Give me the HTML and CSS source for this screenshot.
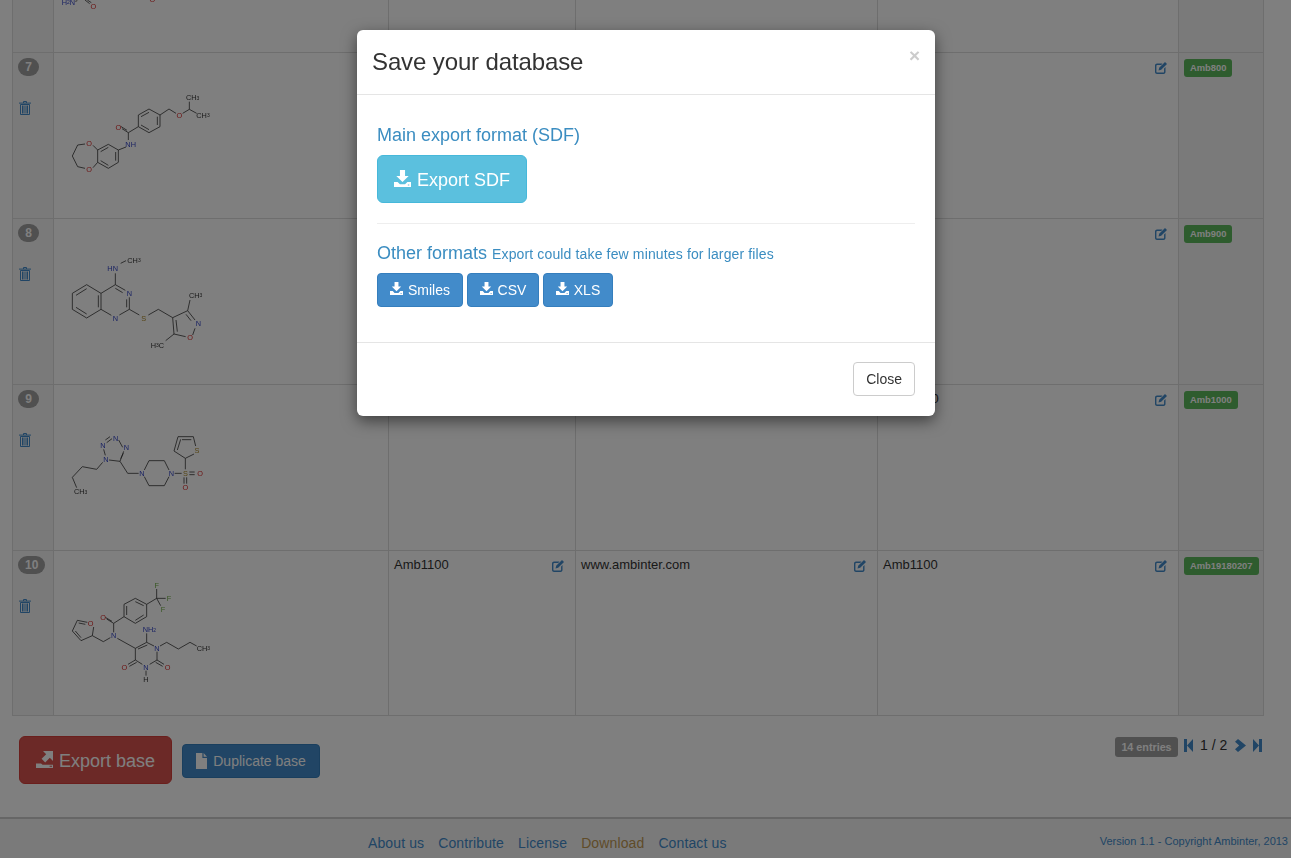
FILE: index.html
```html
<!DOCTYPE html>
<html lang="en">
<head>
<meta charset="utf-8">
<title>Save your database</title>
<link rel="stylesheet" href="styles.css">
</head>
<body>
<svg class="defs" width="0" height="0" aria-hidden="true">
  <symbol id="i-download" viewBox="0 0 16 16"><path d="M5.6 0h4.8v5.6h3.4L8 11.4 2.2 5.6h3.4zM0 11.2h3.4l2.2 2.2h4.8l2.2-2.2H16V16H0zM13 13.6v1h1.4v-1z" fill-rule="evenodd"/></symbol>
  <symbol id="i-export" viewBox="0 0 17 18"><path d="M0 13.4h5l1.6 1.4h10.4V18H0zM13.6 15.8v1H16v-1z" fill-rule="evenodd"/><path d="M7 1h10v10l-3.2-3.2-4.6 4.6-3.6-3.6 4.600-4.600z"/></symbol>
  <symbol id="i-file" viewBox="0 0 11 16"><path d="M0 0h6.400v5H11v11H0zM7.600 0L11 3.800H7.600z"/></symbol>
  <symbol id="i-trash" viewBox="0 0 12 14"><path d="M0 2.100H12M4.500 2V.5H7.500V2M1.500 3.500H10.500V13.500H1.500ZM3.500 4.500V12.500M5 4.500V12.500M7 4.500V12.500M8.500 4.500V12.500" fill="none" stroke="currentColor" stroke-width="1"/></symbol>
  <symbol id="i-edit" viewBox="0 0 12 12"><path d="M2 1.500h5.500L6.200 2.900H2.300c-.5 0-.9.400-.9.900v5.900c0 .5.400.9.900.9h5.900c.5 0 .9-.4.900-.9V6.400l1.400-1.400V10c0 1.100-.9 2-2 2H2c-1.100 0-2-.9-2-2V3.500c0-1.100.9-2 2-2z"/><path d="M10 0l2 2-5.800 5.800-2.700.7.700-2.700z"/></symbol>
  <symbol id="i-first" viewBox="0 0 9 13"><path d="M0 0h3v13H0zM9 0v13L3 6.500z"/></symbol>
  <symbol id="i-last" viewBox="0 0 9 13"><path d="M9 0H6v13h3zM0 0v13l6-6.500z"/></symbol>
  <symbol id="i-next" viewBox="0 0 11 13"><path d="M3 0l8 6.500L3 13 0 10.200l4.200-3.700L0 2.800z"/></symbol>
</svg>

<main class="page">
  <table class="data">
    <colgroup><col class="c-num"><col class="c-mol"><col class="c-a"><col class="c-b"><col class="c-c"><col class="c-d"></colgroup>
    <tbody>
      <tr class="row-cut">
        <td class="side"></td>
        <td class="mol"><svg class="mol-svg-cut" viewBox="162 0 1002 156">
          <path class="bond" d="M232 2l-6 2M255 0l14 11M262 0l12 8"/>
          <text class="atom n" x="205" y="6">H<tspan class="sub">2</tspan>N</text>
          <text class="atom o" x="280" y="20">O</text>
          <text class="atom o" x="457" y="-2">O</text>
        </svg></td>
        <td></td><td></td><td></td><td class="side"></td>
      </tr>
      <tr>
        <td class="side"><span class="badge">7</span><svg class="trash"><use href="#i-trash"/></svg></td>
        <td class="mol"><svg class="mol-svg" viewBox="162 159 1002 495">
          <path class="bond" d="M415 345L447 327 480 345V380L447 398 415 380ZM423 350L447 337M472 350V375M423 375L447 389"/>
          <path class="bond" d="M480 345L507 327 528 340M548 340L568 328V305M568 328L590 340"/>
          <path class="bond" d="M415 380L385 398V420M385 398L366 386M381 391L362 379"/>
          <path class="bond" d="M378 441L355 450V487L325 505 293 487V450L325 433 355 450M347 456V482M325 442L302 455M302 482L325 496"/>
          <path class="bond" d="M293 450L279 436M293 487L279 503M255 432L233 435 217 468 233 500 255 505"/>
          <text class="atom" x="578" y="293">CH<tspan class="sub">3</tspan></text>
          <text class="atom" x="609" y="346">CH<tspan class="sub">3</tspan></text>
          <text class="atom o" x="538" y="346">O</text>
          <text class="atom o" x="355" y="381">O</text>
          <text class="atom n" x="392" y="433">NH</text>
          <text class="atom o" x="267" y="430">O</text>
          <text class="atom o" x="267" y="508">O</text>
        </svg></td>
        <td><div class="cell-row"><span>Amb800</span><svg class="edit"><use href="#i-edit"/></svg></div></td>
        <td><div class="cell-row"><span>www.ambinter.com</span><svg class="edit"><use href="#i-edit"/></svg></div></td>
        <td><div class="cell-row"><span>Amb800</span><svg class="edit"><use href="#i-edit"/></svg></div></td>
        <td class="side"><span class="tag">Amb800</span></td>
      </tr>
      <tr>
        <td class="side"><span class="badge">8</span><svg class="trash"><use href="#i-trash"/></svg></td>
        <td class="mol"><svg class="mol-svg" viewBox="162 -3 1002 495">
          <path class="bond" d="M217 220L260 194 303 220V268L260 294 217 268ZM228 226L260 206M295 226V262M228 262L260 282"/>
          <path class="bond" d="M303 220L346 194 376 211M388 232V268L358 285M334 286L303 268M346 205L368 218M380 238V262"/>
          <path class="bond" d="M346 194V160M362 130L378 122M388 268L418 285M445 285L475 268 518 293"/>
          <path class="bond" d="M518 293L563 272 585 300M585 325L578 345M557 350L522 342 518 293M528 300L532 335M558 283L573 302"/>
          <path class="bond" d="M563 272L570 240M522 342L497 362"/>
          <text class="atom n" x="338" y="145">HN</text>
          <text class="atom" x="402" y="121">CH<tspan class="sub">3</tspan></text>
          <text class="atom n" x="388" y="220">N</text>
          <text class="atom n" x="346" y="294">N</text>
          <text class="atom s" x="431" y="294">S</text>
          <text class="atom" x="587" y="226">CH<tspan class="sub">3</tspan></text>
          <text class="atom n" x="595" y="311">N</text>
          <text class="atom o" x="570" y="353">O</text>
          <text class="atom" x="472" y="375">H<tspan class="sub">3</tspan>C</text>
        </svg></td>
        <td><div class="cell-row"><span>Amb900</span><svg class="edit"><use href="#i-edit"/></svg></div></td>
        <td><div class="cell-row"><span>www.ambinter.com</span><svg class="edit"><use href="#i-edit"/></svg></div></td>
        <td><div class="cell-row"><span>Amb900</span><svg class="edit"><use href="#i-edit"/></svg></div></td>
        <td class="side"><span class="tag">Amb900</span></td>
      </tr>
      <tr>
        <td class="side"><span class="badge">9</span><svg class="trash"><use href="#i-trash"/></svg></td>
        <td class="mol"><svg class="mol-svg" viewBox="162 495 1002 495">
          <path class="bond" d="M327 720L360 724 371 694M368 682L356 660M336 656L320 668M330 650L316 660M311 688L316 706M370 700L362 716"/>
          <path class="bond" d="M308 727L290 748 247 740 217 772 230 803"/>
          <path class="bond" d="M360 724L383 760H416M433 750L447 722H493L507 750M507 770L493 797H447L433 770"/>
          <path class="bond" d="M524 760H545M568 756H584M568 764H584M552 772V791M560 772V791M556 748V715"/>
          <path class="bond" d="M556 715L522 693 534 650H580L587 678M582 702L556 715M532 690L542 658M546 659H574"/>
          <text class="atom n" x="318" y="718">N</text>
          <text class="atom n" x="309" y="677">N</text>
          <text class="atom n" x="347" y="654">N</text>
          <text class="atom n" x="379" y="683">N</text>
          <text class="atom" x="242" y="815">CH<tspan class="sub">3</tspan></text>
          <text class="atom n" x="426" y="760">N</text>
          <text class="atom n" x="514" y="760">N</text>
          <text class="atom s" x="556" y="760">S</text>
          <text class="atom o" x="600" y="760">O</text>
          <text class="atom o" x="556" y="803">O</text>
          <text class="atom s" x="591" y="690">S</text>
        </svg></td>
        <td><div class="cell-row"><span>Amb1000</span><svg class="edit"><use href="#i-edit"/></svg></div></td>
        <td><div class="cell-row"><span>www.ambinter.com</span><svg class="edit"><use href="#i-edit"/></svg></div></td>
        <td><div class="cell-row"><span>Amb1000</span><svg class="edit"><use href="#i-edit"/></svg></div></td>
        <td class="side"><span class="tag">Amb1000</span></td>
      </tr>
      <tr class="row-last">
        <td class="side"><span class="badge">10</span><svg class="trash"><use href="#i-trash"/></svg></td>
        <td class="mol"><svg class="mol-svg" viewBox="162 18 1002 492">
          <path class="bond" d="M470 132V160M497 160H470M482 182L470 160M440 178L470 160"/>
          <path class="bond" d="M440 178L406 160 372 178V215L406 235 440 215ZM431 182L406 170M380 183V210M406 226L431 210"/>
          <path class="bond" d="M372 215L341 235V262M341 235L320 222M336 229L316 217"/>
          <path class="bond" d="M331 278L310 290 277 272 243 287 217 258 232 226 262 232M281 246L277 272M243 278L226 258M236 234L256 238"/>
          <path class="bond" d="M352 280L406 310 440 292 462 303M471 320V345L449 358M427 358L406 345V310M414 312L442 300 M440 292V265"/>
          <path class="bond" d="M480 303L500 292 535 312 570 292 590 303M471 345L492 358M467 352L488 364M406 345L384 358M410 352L388 364M438 377V392"/>
          <text class="atom f" x="470" y="122">F</text>
          <text class="atom f" x="507" y="160">F</text>
          <text class="atom f" x="489" y="192">F</text>
          <text class="atom o" x="309" y="216">O</text>
          <text class="atom n" x="341" y="272">N</text>
          <text class="atom o" x="272" y="236">O</text>
          <text class="atom n" x="448" y="254">NH<tspan class="sub">2</tspan></text>
          <text class="atom n" x="471" y="310">N</text>
          <text class="atom" x="610" y="310">CH<tspan class="sub">3</tspan></text>
          <text class="atom n" x="438" y="366">N</text>
          <text class="atom o" x="503" y="366">O</text>
          <text class="atom o" x="373" y="366">O</text>
          <text class="atom" x="438" y="403">H</text>
        </svg></td>
        <td><div class="cell-row"><span>Amb1100</span><svg class="edit"><use href="#i-edit"/></svg></div></td>
        <td><div class="cell-row"><span>www.ambinter.com</span><svg class="edit"><use href="#i-edit"/></svg></div></td>
        <td><div class="cell-row"><span>Amb1100</span><svg class="edit"><use href="#i-edit"/></svg></div></td>
        <td class="side"><span class="tag">Amb19180207</span></td>
      </tr>
    </tbody>
  </table>

  <div class="toolbar">
    <div class="actions">
      <button class="btn btn-lg btn-danger"><svg class="ic-export"><use href="#i-export"/></svg>Export base</button>
      <button class="btn btn-primary btn-dup"><svg class="ic-file"><use href="#i-file"/></svg>Duplicate base</button>
    </div>
    <div class="pager">
      <span class="entries">14 entries</span>
      <svg class="pg-step"><use href="#i-first"/></svg>
      <span class="pg-num">1 / 2</span>
      <svg class="pg-next"><use href="#i-next"/></svg>
      <svg class="pg-step"><use href="#i-last"/></svg>
    </div>
  </div>
</main>

<footer class="foot">
  <nav class="foot-nav">
    <a href="#">About us</a>
    <a href="#">Contribute</a>
    <a href="#">License</a>
    <a href="#" class="warn">Download</a>
    <a href="#">Contact us</a>
  </nav>
  <span class="version">Version 1.1 - Copyright Ambinter, 2013</span>
</footer>

<div class="backdrop"></div>
<section class="modal">
  <header class="modal-head">
    <h3>Save your database</h3>
    <span class="close">×</span>
  </header>
  <div class="modal-body">
    <h4>Main export format (SDF)</h4>
    <button class="btn btn-lg btn-info"><svg class="ic-dl-lg"><use href="#i-download"/></svg>Export SDF</button>
    <hr>
    <h4 class="other">Other formats <small>Export could take few minutes for larger files</small></h4>
    <div class="btn-row">
      <button class="btn btn-primary btn-smiles"><svg class="ic-dl"><use href="#i-download"/></svg>Smiles</button>
      <button class="btn btn-primary btn-csv"><svg class="ic-dl"><use href="#i-download"/></svg>CSV</button>
      <button class="btn btn-primary btn-xls"><svg class="ic-dl"><use href="#i-download"/></svg>XLS</button>
    </div>
  </div>
  <div class="modal-foot"><button class="btn btn-default">Close</button></div>
</section>
</body>
</html>
```
FILE: styles.css
```css
* { box-sizing: border-box; }
html, body { margin: 0; padding: 0; }
body {
  height: 858px;
  overflow: hidden;
  background: #fff;
  color: #333;
  font-family: "Liberation Sans", Arial, sans-serif;
  font-size: 14px;
  line-height: 1.43;
}
.defs { position: absolute; }

.page { padding: 0 27px 0 12px; height: 817px; }

.data {
  width: 1252px;
  table-layout: fixed;
  border-collapse: separate;
  border-spacing: 0;
  border-right: 1px solid #ddd;
  font-size: 13px;
}
.c-num { width: 41px; }
.c-mol { width: 335px; }
.c-a { width: 187px; }
.c-b { width: 302px; }
.c-c { width: 301px; }
.c-d { width: 85px; }

.data td {
  height: 166px;
  padding: 5px 5px 0 5px;
  vertical-align: top;
  border-left: 1px solid #ddd;
  border-bottom: 1px solid #ddd;
}
.data .row-cut td { height: 53px; }
.data .row-last td { height: 165px; }
.data td.side { background: #f5f5f5; }
.data td.mol { padding: 0; overflow: hidden; }

.mol-svg { display: block; width: 334px; height: 165px; overflow: visible; filter: blur(.3px); }
.row-last .mol-svg { height: 164px; }
.mol-svg-cut { display: block; width: 334px; height: 52px; filter: blur(.3px); }
.bond { fill: none; stroke: #333; stroke-width: 2.4; }
.atom {
  font-size: 22px;
  fill: #333;
  text-anchor: middle;
  dominant-baseline: central;
}
.atom.n { fill: #3344c4; }
.atom.o { fill: #d82a2a; }
.atom.s { fill: #ab8a2c; }
.atom.f { fill: #6eae46; }
.sub { font-size: 15px; }

.badge {
  display: inline-block;
  min-width: 21px;
  height: 18px;
  padding: 3px 7px;
  border-radius: 10px;
  background: #a0a0a0;
  color: #fff;
  font-size: 12px;
  font-weight: 700;
  line-height: 12px;
  text-align: center;
}
.trash {
  display: block;
  width: 12px;
  height: 14px;
  margin: 24px 0 0 1px;
  color: #428bca;
}
.cell-row {
  display: flex;
  justify-content: space-between;
  align-items: flex-start;
  padding-right: 6px;
  line-height: 18px;
}
.edit { width: 12px; height: 12px; margin-top: 4px; fill: #428bca; flex: none; }
.tag {
  display: inline-block;
  height: 18px;
  margin-top: 1px;
  padding: 0 6px;
  border-radius: 3px;
  background: #5cb85c;
  color: #fff;
  font-size: 9.4px;
  font-weight: 700;
  line-height: 18px;
  white-space: nowrap;
}

.toolbar {
  display: flex;
  justify-content: space-between;
  align-items: flex-start;
  padding: 20px 2px 0 7px;
  width: 1252px;
}
.actions { display: flex; align-items: center; gap: 10px; }
.pager { display: flex; align-items: center; gap: 7px; margin-top: 1px; }
.entries {
  display: block;
  width: 63px;
  height: 20px;
  margin-right: -1px;
  border-radius: 3px;
  background: #a0a0a0;
  color: #fff;
  font-size: 10.75px;
  font-weight: 700;
  line-height: 20px;
  text-align: center;
}
.pg-step { width: 9px; height: 13px; fill: #428bca; margin-top: -4px; }
.pg-next { width: 11px; height: 13px; fill: #428bca; margin-top: -4px; }
.pg-num { min-width: 28px; color: #333; font-size: 14px; line-height: 20px; margin-top: -4px; }

.btn {
  display: inline-flex;
  align-items: center;
  justify-content: center;
  height: 34px;
  padding: 0 12px;
  border: 1px solid transparent;
  border-radius: 4px;
  font-family: inherit;
  font-size: 14px;
  line-height: 20px;
  white-space: nowrap;
}
.btn-lg { height: 48px; padding: 1px 16px 0; border-radius: 6px; font-size: 18px; }
.btn-danger { background: #d9534f; border-color: #d43f3a; color: #fff; }
.btn-primary { background: #428bca; border-color: #357ebd; color: #fff; }
.btn-info { background: #5bc0de; border-color: #46b8da; color: #fff; }
.btn-default { background: #fff; border-color: #ccc; color: #333; }
.ic-export { width: 17px; height: 18px; fill: #fff; margin-right: 6px; margin-top: -4px; }
.ic-file { width: 11px; height: 16px; fill: #fff; margin-right: 6px; }
.btn-dup { width: 138px; margin-top: 2px; }
.btn-smiles { width: 86px; padding: 0; }
.btn-csv { width: 72px; padding: 0; }
.btn-xls { width: 70px; padding: 0; }
.ic-dl { width: 13px; height: 13px; fill: #fff; margin-right: 5px; margin-top: -3px; }
.ic-dl-lg { width: 17px; height: 17px; fill: #fff; margin-right: 6px; margin-top: -3px; }

.foot {
  position: relative;
  display: flex;
  height: 41px;
  padding-left: 368px;
  background: #f5f5f5;
  border-top: 2px solid #ccc;
}
.foot-nav { display: flex; gap: 14px; padding-top: 14px; }
.foot-nav a { color: #428bca; text-decoration: none; line-height: 20px; letter-spacing: .12px; }
.foot-nav a.warn { color: #c09853; }
.version {
  position: absolute;
  right: 3px;
  top: 14px;
  color: #428bca;
  font-size: 11px;
  line-height: 16px;
}

.backdrop {
  position: fixed;
  inset: 0;
  background: rgba(0, 0, 0, .5);
}
.modal {
  position: absolute;
  left: 357px;
  top: 30px;
  width: 578px;
  height: 386px;
  background: #fff;
  border-radius: 6px;
  box-shadow: 0 5px 15px rgba(0, 0, 0, .5);
}
.modal-head {
  position: relative;
  height: 65px;
  padding: 15px;
  border-bottom: 1px solid #e5e5e5;
}
.modal-head h3 {
  margin: 0;
  color: #333;
  font-size: 24px;
  font-weight: 400;
  line-height: 33px;
  letter-spacing: -.12px;
}
.close {
  position: absolute;
  right: 15px;
  top: 14px;
  color: #ccc;
  font-size: 19px;
  font-weight: 700;
  line-height: 24px;
}
.modal-body { padding: 30px 20px 0; height: 247px; }
.modal-body h4 {
  margin: 0 0 10px;
  color: #3b8dc1;
  font-size: 18px;
  font-weight: 400;
  line-height: 20px;
}
.modal-body h4.other { margin-bottom: 9px; }
.modal-body small { font-size: 14px; letter-spacing: .14px; }
.modal-body hr { margin: 20px 0 19px; border: 0; border-top: 1px solid #eee; }
.btn-row { display: flex; gap: 4px; }
.modal-foot {
  display: flex;
  justify-content: flex-end;
  height: 74px;
  padding: 19px 20px 0;
  border-top: 1px solid #e5e5e5;
}
```
